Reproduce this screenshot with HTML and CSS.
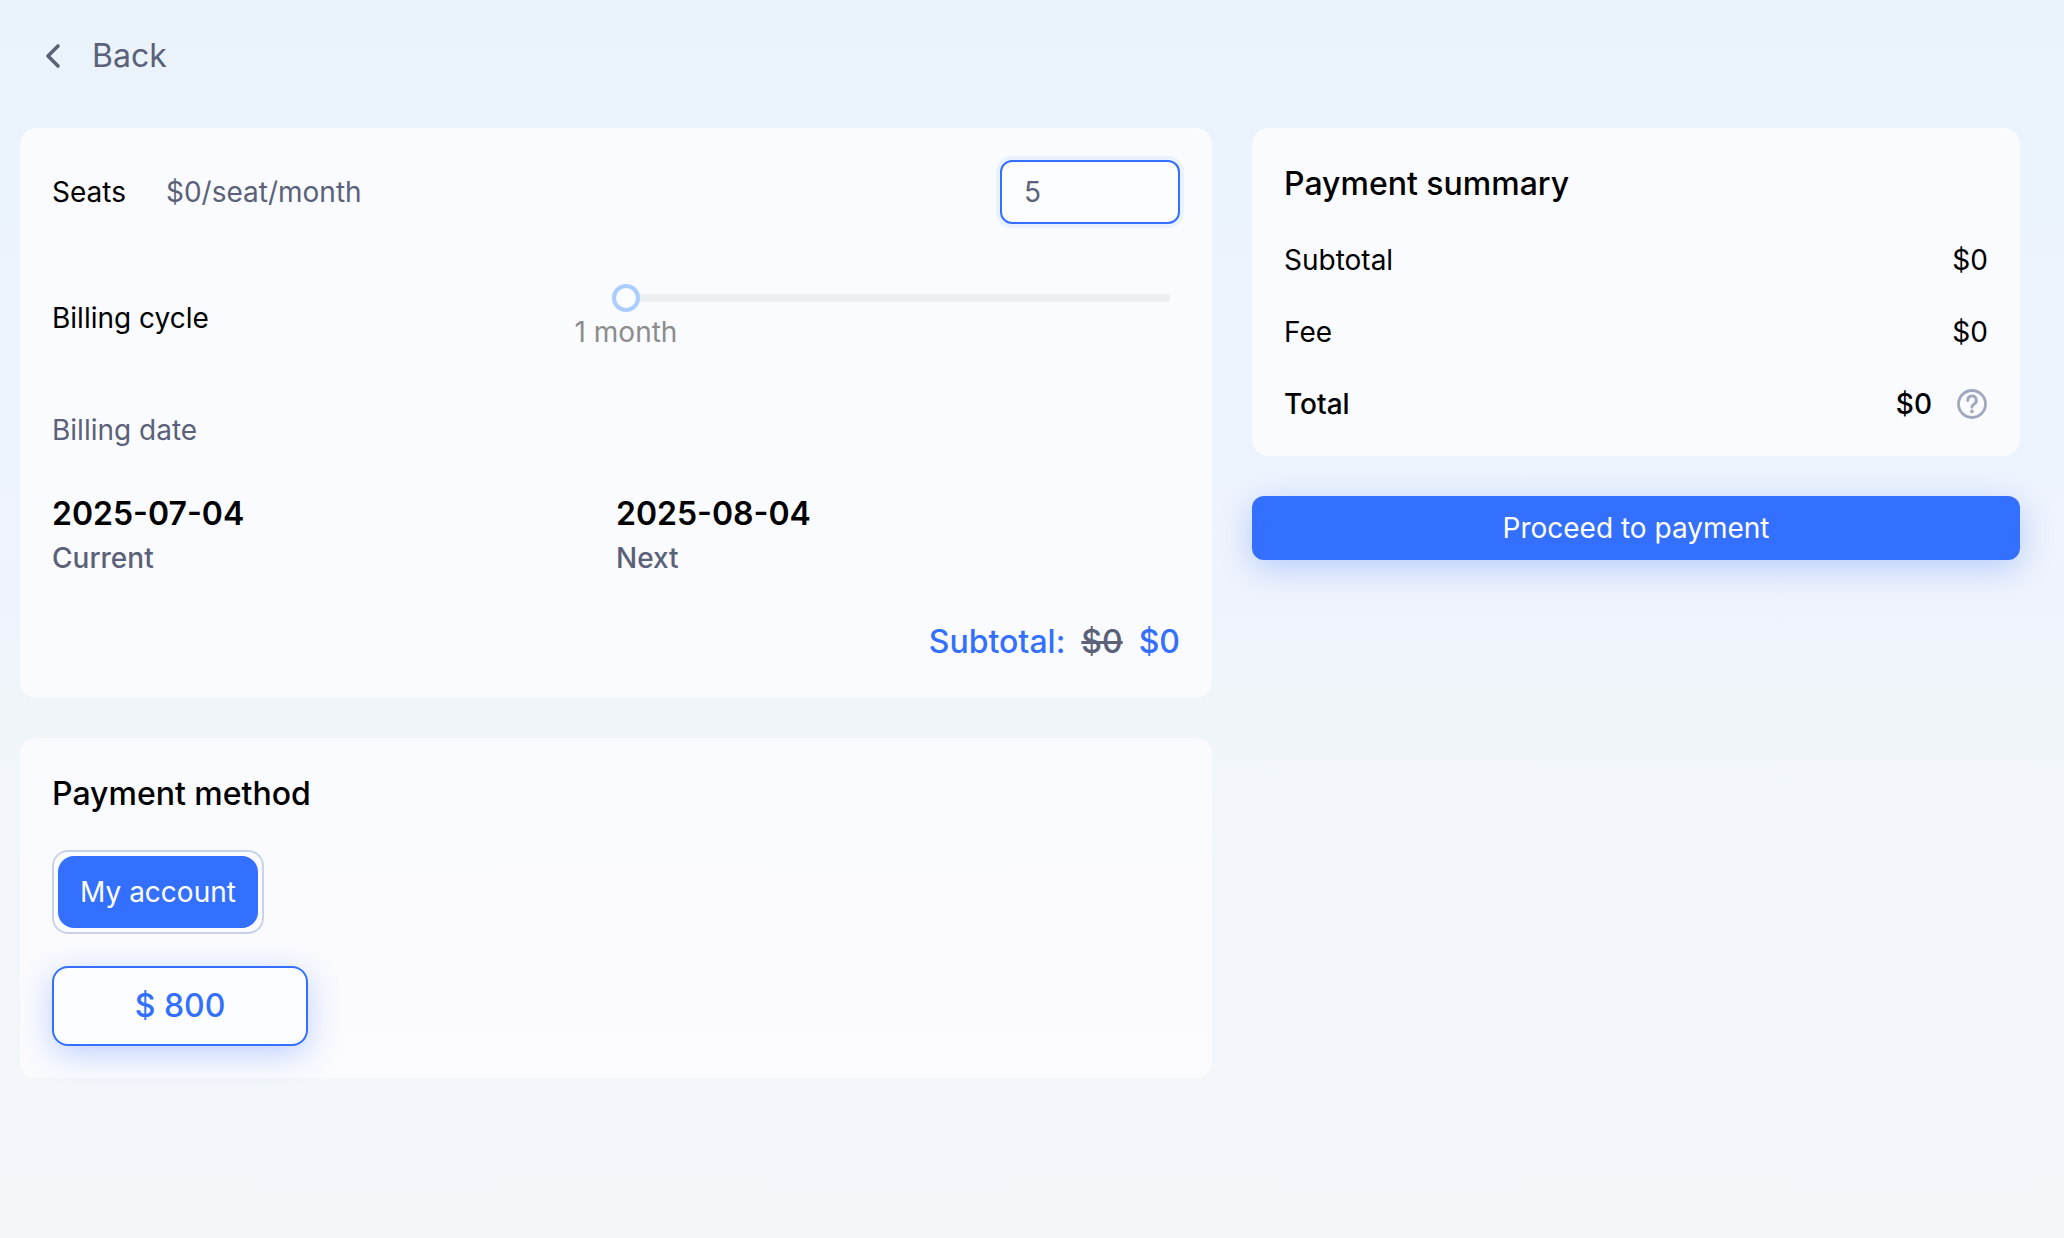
FILE: index.html
```html
<!DOCTYPE html>
<html lang="en">
<head>
  <meta charset="UTF-8">
  <meta name="viewport" content="width=device-width, initial-scale=1.0">
  <title>Payment</title>
  <link rel="stylesheet" href="styles.css">
</head>
<body>

<header class="topbar">
  <a class="back" href="#">
    <svg class="back-icon" viewBox="0 0 32 32" fill="none" stroke="currentColor" stroke-width="3.600" stroke-linecap="round" stroke-linejoin="round" aria-hidden="true">
      <path d="M22 6 L12 16 L22 26"/>
    </svg>
    <span>Back</span>
  </a>
</header>

<main class="layout">
  <div class="column">
    <section class="card plan">
      <div class="row">
        <label for="seats">Seats</label>
        <span class="price muted">$0/seat/month</span>
        <input class="seats-input" id="seats" type="text" inputmode="numeric" value="5">
      </div>

      <div class="halves cycle">
        <label for="cycle">Billing cycle</label>
        <div>
          <input class="slider" id="cycle" type="range" min="1" max="12" value="1">
          <output class="slider-mark" for="cycle">1 month</output>
        </div>
      </div>

      <div class="muted">Billing date</div>

      <div class="halves">
        <div>
          <div class="date">2025-07-04</div>
          <div class="date-label">Current</div>
        </div>
        <div>
          <div class="date">2025-08-04</div>
          <div class="date-label">Next</div>
        </div>
      </div>

      <div class="plan-total">
        <span>Subtotal:</span>
        <del>$0</del>
        <span>$0</span>
      </div>
    </section>

    <section class="card">
      <h2>Payment method</h2>
      <div class="tabs">
        <button class="tab" type="button">My account</button>
      </div>
      <button class="balance" type="button">$ 800</button>
    </section>
  </div>

  <div class="column">
    <section class="card">
      <h2>Payment summary</h2>
      <div class="row summary-row"><span>Subtotal</span><span>$0</span></div>
      <div class="row summary-row"><span>Fee</span><span>$0</span></div>
      <div class="row summary-row total">
        <span>Total</span>
        <span class="total-value">
          $0
          <svg class="help-icon" viewBox="0 0 32 32" fill="none" stroke="currentColor" aria-hidden="true">
            <circle cx="16" cy="16" r="13.500" stroke-width="2.800"/>
            <path d="M11.800 12.700 A4.300 4.300 0 1 1 18.200 16 C16.600 17 15.900 17.600 15.900 19.200" stroke-width="2.800" stroke-linecap="round"/>
            <circle cx="15.900" cy="23.400" r="1.800" fill="currentColor" stroke="none"/>
          </svg>
        </span>
      </div>
    </section>

    <button class="pay" type="button">Proceed to payment</button>
  </div>
</main>

</body>
</html>
```
FILE: styles.css
```css
* {
  box-sizing: border-box;
}

body {
  margin: 0;
  min-height: 100vh;
  font-family: Inter, "Liberation Sans", sans-serif;
  font-size: 28px;
  line-height: 40px;
  color: #000;
  background: linear-gradient(#eaf2fc, #ebf3fb 15%, #eef4fd 38%, #eff3fc 48%, #f0f5fa 56%, #f4f7fa);
}

button,
input {
  font: inherit;
}

button {
  padding: 0;
  cursor: pointer;
}

h2 {
  margin: 0;
  font-size: 32px;
  line-height: 48px;
  font-weight: 500;
}

.topbar {
  display: flex;
  align-items: center;
  height: 112px;
  padding: 0 36px;
}

.back {
  display: flex;
  align-items: center;
  gap: 24px;
  font-size: 32px;
  color: #5a6178;
  text-decoration: none;
}

.back-icon {
  width: 32px;
  height: 32px;
}

.layout {
  display: grid;
  grid-template-columns: 149fr 96fr;
  gap: 40px;
  padding: 16px 44px 40px 20px;
}

.column {
  display: flex;
  flex-direction: column;
  gap: 40px;
}

.card {
  display: flex;
  flex-direction: column;
  align-items: stretch;
  gap: 32px;
  padding: 32px;
  border-radius: 16px;
  background: rgba(252, 253, 255, 0.8);
}

.plan {
  gap: 40px;
}

.row {
  display: flex;
  align-items: center;
}

.muted {
  color: #5a6178;
}

.price {
  margin-left: 40px;
}

.seats-input {
  width: 180px;
  height: 64px;
  margin-left: auto;
  padding: 0 22px;
  border: 2px solid #3370ff;
  border-radius: 12px;
  outline: none;
  background: #fcfdfe;
  color: #5a6178;
  box-shadow: 0 0 0 4px #e9f2fd;
}

.halves {
  display: grid;
  grid-template-columns: 1fr 1fr;
  align-items: center;
}

.cycle {
  padding: 20px 0 18px;
}

/* thumb hangs over the left edge of the column */
.slider {
  display: block;
  width: calc(100% - 6px);
  height: 28px;
  margin: 0 0 0 -4px;
  background: none;
  appearance: none;
}

.slider::-webkit-slider-runnable-track {
  height: 8px;
  border-radius: 2px;
  background: #edf0f3;
}

.slider::-webkit-slider-thumb {
  width: 28px;
  height: 28px;
  margin-top: -10px;
  border: 4px solid #abcdff;
  border-radius: 50%;
  background: #fcfdff;
  appearance: none;
}

.slider-mark {
  display: block;
  width: 120px;
  margin-left: -50px;
  text-align: center;
  color: #8c8c8c;
}

.date {
  font-size: 32px;
  line-height: 48px;
  font-weight: 600;
}

.date-label {
  font-weight: 500;
  color: #5a6178;
}

.plan-total {
  display: flex;
  justify-content: flex-end;
  gap: 16px;
  font-size: 32px;
  line-height: 48px;
  font-weight: 500;
  color: #3370ff;
}

.plan-total del {
  color: #5a6178;
}

.tabs {
  align-self: flex-start;
  padding: 4px;
  border: 2px solid #c9d3e8;
  border-radius: 16px;
}

.tab {
  display: block;
  width: 200px;
  height: 72px;
  border: 0;
  border-radius: 16px;
  background: #3370ff;
  color: #fff;
}

.balance {
  align-self: flex-start;
  width: 256px;
  height: 80px;
  border: 2px solid #3370ff;
  border-radius: 16px;
  background: #fcfdfe;
  color: #3370ff;
  font-size: 32px;
  font-weight: 500;
  box-shadow: 0 8px 32px rgba(51, 112, 255, 0.3);
}

.summary-row {
  justify-content: space-between;
}

.total {
  font-weight: 500;
}

.total-value {
  display: flex;
  align-items: center;
  gap: 24px;
}

.help-icon {
  width: 32px;
  height: 32px;
  color: #a0a8bd;
}

.pay {
  height: 64px;
  border: 0;
  border-radius: 12px;
  background: #3370ff;
  color: #fff;
  box-shadow: 0 8px 32px rgba(51, 112, 255, 0.3);
}
```
